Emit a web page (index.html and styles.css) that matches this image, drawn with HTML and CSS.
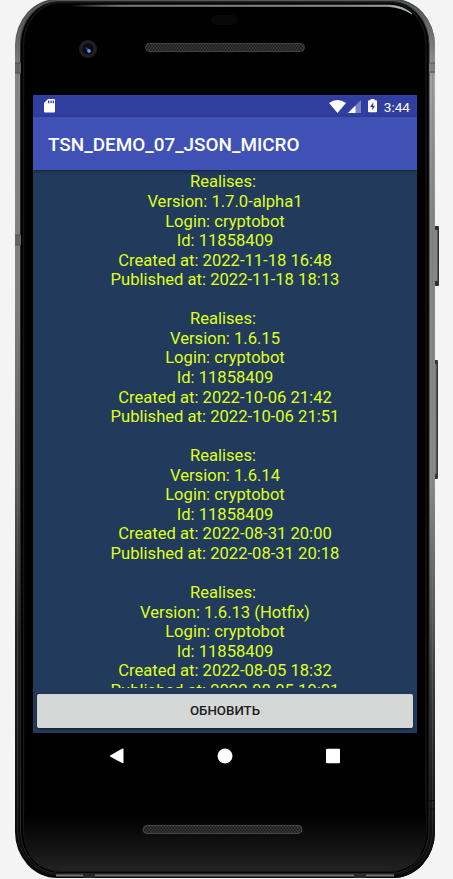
FILE: index.html
```html
<!DOCTYPE html>
<html lang="ru">
<head>
<meta charset="utf-8">
<title>TSN_DEMO_07_JSON_MICRO</title>
<link rel="stylesheet" href="styles.css">
</head>
<body>
<svg class="device" width="453" height="879" viewBox="0 0 453 879" aria-hidden="true">
  <defs>
    <linearGradient id="rim" x1="0" y1="0" x2="0" y2="1">
      <stop offset="0" stop-color="#454746"/><stop offset=".03" stop-color="#555857"/><stop offset=".09" stop-color="#858887"/><stop offset=".35" stop-color="#7d807f"/><stop offset=".55" stop-color="#585a59"/><stop offset=".72" stop-color="#202221"/><stop offset=".95" stop-color="#0c0c0c"/><stop offset="1" stop-color="#080808"/>
    </linearGradient>
    <linearGradient id="rimRight" x1="0" y1="0" x2="0" y2="1">
      <stop offset="0" stop-color="#454746"/><stop offset=".09" stop-color="#a2a2a2"/><stop offset=".25" stop-color="#858585"/><stop offset=".55" stop-color="#8a8a8a"/><stop offset=".8" stop-color="#343434"/><stop offset=".95" stop-color="#101010"/><stop offset="1" stop-color="#080808"/>
    </linearGradient>
    <linearGradient id="innerEdge" x1="0" y1="0" x2="0" y2="1">
      <stop offset="0" stop-color="#777" stop-opacity=".5"/><stop offset=".8" stop-color="#777" stop-opacity=".35"/><stop offset="1" stop-color="#777" stop-opacity=".15"/>
    </linearGradient>
    <linearGradient id="chin" x1="0" y1="0" x2="0" y2="1">
      <stop offset="0" stop-color="#000"/><stop offset=".5" stop-color="#101010"/><stop offset="1" stop-color="#222"/>
    </linearGradient>
    <linearGradient id="shine" x1="0" y1="0" x2="1" y2="0">
      <stop offset="0" stop-color="#788080" stop-opacity="0"/><stop offset=".15" stop-color="#7d8585"/><stop offset=".8" stop-color="#959b9b"/><stop offset="1" stop-color="#b8bcbc"/>
    </linearGradient>
    <pattern id="mesh" width="3" height="4" patternUnits="userSpaceOnUse">
      <path d="M0 0l1.5 2L0 4M1.5 0L3 2 1.5 4" fill="none" stroke="#4b4641" stroke-width=".8"/>
    </pattern>
    <clipPath id="rightHalf"><rect x="226" width="227" height="879"/></clipPath>
  </defs>
  <rect x="434" y="226" width="5" height="60" rx="1" fill="#303030"/>
  <rect x="435" y="230" width="2.5" height="51" fill="#858585"/>
  <rect x="433" y="360" width="5" height="119" rx="1" fill="#353535"/>
  <rect x="434" y="364" width="2.5" height="110" fill="#777"/>
  <rect x="15" y="-1" width="420" height="879" rx="42" ry="46" fill="url(#rim)"/>
  <rect x="15" y="-1" width="420" height="879" rx="42" ry="46" fill="url(#rimRight)" clip-path="url(#rightHalf)"/>
  <rect x="17.5" y=".8" width="415" height="873.7" rx="40" ry="44" fill="none" stroke="url(#innerEdge)"/>
  <rect x="20.5" y="1.5" width="408.5" height="872" rx="38" ry="43" fill="#000" stroke="#242625"/>
  <rect x="23.5" y="2.5" width="402.5" height="869" rx="37" ry="42" fill="#000" stroke="#151717" stroke-width="1.5"/>
  <path d="M24 813H426V829Q426 871 388 871H62Q24 871 24 829Z" fill="url(#chin)"/>
  <path d="M56 875.4H394" stroke="#777" stroke-width="2"/>
  <path d="M83 874h12v4h-12zM354 874h12v4h-12z" fill="#292929"/>
  <path d="M15 63h6v10h-6zM15 235h6v10h-6z" fill="#626564"/>
  <path d="M429 63h6v10h-6z" fill="#808080"/>
  <path d="M15 63h6M15 73h6M429 63h6M429 72h6M15 235h6M15 245h6" stroke="#484a4a" stroke-width=".8"/>
  <path d="M429 800.5h6M429 809h6" stroke="#111"/>
  <path d="M70 5.2H390Q404 6 412 14Q402 7.5 388 6.3H70Z" fill="url(#shine)" stroke="url(#shine)" stroke-width=".8"/>
  <rect x="211" y="15" width="27" height="10" rx="5" fill="#07080b"/>
  <circle cx="88" cy="49" r="9" fill="#202020"/><circle cx="88" cy="49" r="5.5" fill="#090b19"/>
  <path d="M85 47l3 1 3 3-2 2-2-2z" fill="#2c4093"/><circle cx="89" cy="51" r="1.8" fill="#7596ef"/>
  <rect x="145.5" y="43.5" width="159" height="8" rx="4" fill="#0d0d0c"/>
  <rect x="145.5" y="43.5" width="159" height="8" rx="4" fill="url(#mesh)" stroke="#514b46" stroke-width=".8"/>
  <rect x="143" y="825.5" width="159" height="8" rx="4" fill="#0d0d0c"/>
  <rect x="143" y="825.5" width="159" height="8" rx="4" fill="url(#mesh)" stroke="#55524e" stroke-width=".8"/>
</svg>
<main class="screen">
  <div class="status">
    <svg class="sd" width="11" height="14" viewBox="0 0 11 14"><path d="M4 0h6q1 0 1 1v11.5q0 1-1 1H1q-1 0-1-1V4z" fill="#fff"/><path d="M4 1.5h1.3v2.7H4zM6.4 1.5h1.3v2.7H6.4zM8.7 1.5H10v2.7H8.7z" fill="#303f9f"/></svg>
    <svg class="wifi" width="17" height="13" viewBox="0 0 17 13"><path d="M0 3Q8.5-3 17 3L8.5 13Z" fill="#fff"/></svg>
    <svg class="signal" width="13" height="13" viewBox="0 0 13 13"><path d="M13 0V13H0Z" fill="#7983c1"/><path d="M7.5 5.5V13H0Z" fill="#fff"/></svg>
    <svg class="battery" width="9" height="14" viewBox="0 0 9 14"><path d="M2.5 0h4v1.3H8q1 0 1 1v10q0 1-1 1H1q-1 0-1-1v-10q0-1 1-1h1.5z" fill="#fff"/><path d="M5.5 3L2 8h2.2v3.5L7 6.7H5z" fill="#303f9f"/></svg>
    <span class="time">3:44</span>
  </div>
  <header class="appbar"><h1>TSN_DEMO_07_JSON_MICRO</h1></header>
  <section class="releases">
    <div class="release"><p>Realises: </p><p>Version: 1.7.0-alpha1</p><p>Login: cryptobot</p><p>Id: 11858409</p><p>Created at: 2022-11-18 16:48</p><p>Published at: 2022-11-18 18:13</p></div>
    <div class="release"><p>Realises: </p><p>Version: 1.6.15</p><p>Login: cryptobot</p><p>Id: 11858409</p><p>Created at: 2022-10-06 21:42</p><p>Published at: 2022-10-06 21:51</p></div>
    <div class="release"><p>Realises: </p><p>Version: 1.6.14</p><p>Login: cryptobot</p><p>Id: 11858409</p><p>Created at: 2022-08-31 20:00</p><p>Published at: 2022-08-31 20:18</p></div>
    <div class="release"><p>Realises: </p><p>Version: 1.6.13 (Hotfix)</p><p>Login: cryptobot</p><p>Id: 11858409</p><p>Created at: 2022-08-05 18:32</p><p>Published at: 2022-08-05 19:01</p></div>
  </section>
  <footer class="actions"><button class="refresh">ОБНОВИТЬ</button></footer>
</main>
<nav class="nav">
  <svg width="16" height="16" viewBox="0 0 16 16"><path d="M1.5 7.2L13 .8Q14.5.2 14.5 1.5v13q0 1-1.5.5L1.5 8.8Q.5 8 1.5 7.2Z" fill="#fff"/></svg>
  <svg width="16" height="16" viewBox="0 0 16 16"><circle cx="8" cy="8" r="7.5" fill="#fff"/></svg>
  <svg width="16" height="16" viewBox="0 0 16 16"><rect x="1" y=".8" width="14" height="14.4" rx="1" fill="#fff"/></svg>
</nav>
</body>
</html>
```
FILE: styles.css
```css
* { box-sizing: border-box; }
body {
  margin: 0;
  padding: 95px 36px 0 33px;
  height: 879px;
  overflow: hidden;
  background: #f4f4f4;
  font-family: Roboto, sans-serif;
}
.device { position: absolute; top: 0; left: 0; z-index: -1; }
.screen {
  display: flex;
  flex-direction: column;
  width: 384px;
  height: 638px;
  background: #223b5c;
}
.screen > * { flex-shrink: 0; }
.status {
  display: flex;
  align-items: center;
  height: 22px;
  padding: 0 7px 0 11px;
  background: #303f9f;
  color: #fff;
}
.wifi { margin-left: auto; }
.signal { margin-left: 2px; }
.battery { margin-left: 7px; }
.time { margin-left: 7px; font-size: 13.6px; line-height: 22px; padding-top: 1px; }
.appbar {
  position: relative;
  height: 53px;
  padding-left: 15px;
  background: #3f51b5;
  box-shadow: 0 1px 3px rgba(0, 0, 0, .45);
}
h1 { margin: 0; color: #fff; font-size: 18.9px; font-weight: 500; line-height: 55px; }
.releases {
  height: 518px;
  padding-top: 2.4px;
  overflow: hidden;
  color: #dfff1c;
  text-align: center;
  font-size: 16.6px;
  line-height: 19.56px;
}
.release { margin-bottom: 19.56px; }
.release p { margin: 0; white-space: pre; }
.actions { padding: 6px 4px 5px; }
.refresh {
  display: block;
  width: 376px;
  height: 34px;
  padding: 0;
  border: 0;
  border-radius: 2px;
  background: #d6d7d7;
  box-shadow: 0 1px 3px rgba(0, 0, 0, .5);
  color: #202020;
  font: 500 13.3px/34px Roboto, sans-serif;
}
.nav {
  display: flex;
  justify-content: center;
  align-items: center;
  gap: 92px;
  width: 384px;
  height: 45px;
}
```
